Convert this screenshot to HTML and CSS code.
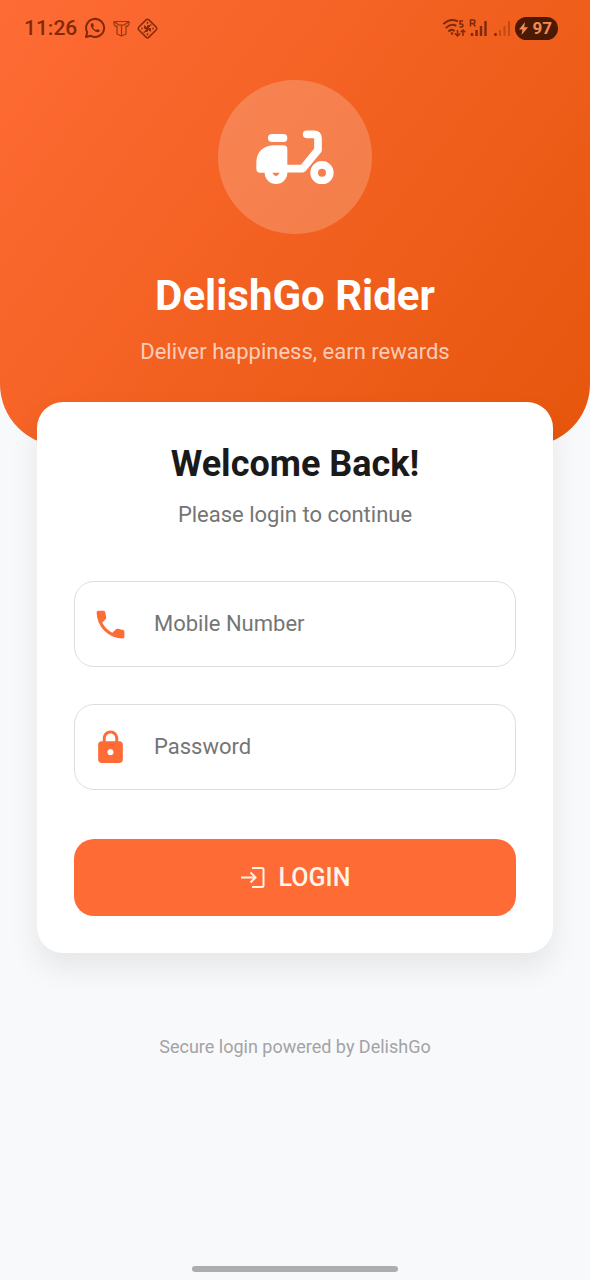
FILE: index.html
```html
<!DOCTYPE html>
<html lang="en">
<head>
<meta charset="utf-8">
<meta name="viewport" content="width=device-width, initial-scale=1">
<title>DelishGo Rider</title>
<link rel="stylesheet" href="styles.css">
</head>
<body>
<header class="hero">
  <div class="status">
    <div class="status-group">
      <span class="clock">11:26</span>
      <svg class="status-icon" width="22" height="22" viewBox="0 0 22 22" fill="none" stroke="currentColor" stroke-width="2" aria-hidden="true">
        <path d="M2 20 3.2 15.2A9 9 0 1 1 6.800 18.800Z" stroke-linejoin="round"/>
        <path d="M7.300 6.200C6 8 7 10.500 9 12.600S13.500 16 15.300 14.800L15.800 13.200 13.500 12 12.300 13.100C11 12.700 9.500 11.200 9 9.900L10 8.800 9 6.200Z" fill="currentColor" stroke="none"/>
      </svg>
      <svg class="status-icon thin" width="17" height="17" viewBox="0 0 17 17" fill="none" stroke="currentColor" stroke-width="1.200" stroke-linejoin="round" aria-hidden="true">
        <path d="M1 1.500H16V4L14.500 6.500 13 6V14L8.500 16 4 14V6L2.500 6.500 1 4ZM1.500 2 6 5H11L15.500 2M8.500 5.500V15.500"/>
      </svg>
      <svg class="status-icon" width="21" height="21" viewBox="0 0 22 22" fill="none" stroke="currentColor" stroke-width="1.500" stroke-linejoin="round" aria-hidden="true">
        <path d="M9.800 1.700Q11 .800 12.200 1.700L20.300 9.800Q21.200 11 20.300 12.200L12.200 20.300Q11 21.200 9.800 20.300L1.700 12.200Q.800 11 1.700 9.800Z"/>
        <path d="M11 11 8 8V11ZM11 11 14 8H11ZM11 11 14 14V11ZM11 11 8 14H11Z" fill="currentColor" stroke-width="1"/>
        <path d="M11 4V6M4.500 11H6M16 11H17.500M11 16V18M14.500 6.500V7.500M7.500 14.500V15.500"/>
      </svg>
    </div>
    <div class="status-group right">
      <svg width="68" height="20" viewBox="0 0 68 20" fill="none" stroke="currentColor" aria-hidden="true">
        <g stroke-width="2" stroke-linecap="round">
          <path d="M2 5.500Q8 0 15 3M4.500 9.500Q9 5.500 13.500 7.500M7 13Q9.500 11 12 12.500"/>
        </g>
        <circle cx="10" cy="15.500" r="1.300" fill="currentColor" stroke="none"/>
        <path d="M21 3H18V6H19.500Q21 6 21 7.500T19.500 9H17.500" stroke-width="1.600"/>
        <path d="M15.500 12V17.500M13 15.500 15.500 18 18 15.500M21 18V12M18.700 14.300 21 12 23.300 14.300" stroke-width="1.500"/>
        <path d="M28.500 8.500V2H31Q33 2 33 3.700T31 5.500H28.500M31 5.500 33.500 8.500" stroke-width="1.500"/>
        <path d="M30 15V18M34.500 12V18M39 8V18M43.500 3V18" stroke-width="2.400"/>
        <path d="M53.500 15V18" stroke-width="2.400"/>
        <path d="M58 12V18M62.500 8V18M67 3V18" stroke-width="2" opacity=".4"/>
      </svg>
      <span class="battery">
        <svg width="9" height="13" viewBox="0 0 9 13" fill="currentColor" aria-hidden="true"><path d="M6 0 0 7.500H3.500L2.500 13 9 5.200H5.200Z"/></svg>97
      </span>
    </div>
  </div>
  <div class="brand">
    <div class="logo">
      <svg viewBox="138 165 234 164" aria-hidden="true">
        <g fill="none" stroke="#fff">
          <path d="M290 178H311Q324 178 324 191V225L278 281H220" stroke-width="23" stroke-linecap="round" stroke-linejoin="round"/>
          <circle cx="336" cy="293" r="23.500" stroke-width="23"/>
        </g>
        <rect x="174" y="177" width="58" height="24" rx="12" fill="#fff"/>
        <path d="M190 211H220Q232 211 232 223V293A34 34 0 0 1 164 293H151Q139 293 139 281V260Q142 215 190 211ZM187 293Q198 314 209 293Z" fill="#fff" fill-rule="evenodd"/>
      </svg>
    </div>
    <h1 class="brand-name">DelishGo Rider</h1>
    <p class="tagline">Deliver happiness, earn rewards</p>
  </div>
</header>
<main class="content">
  <form class="card">
    <h2 class="card-title">Welcome Back!</h2>
    <p class="card-sub">Please login to continue</p>
    <div class="field">
      <label for="mobile" aria-label="Mobile Number"><svg class="field-icon" viewBox="0 0 24 24" aria-hidden="true"><path d="M4 3H7.500Q8.300 3 8.500 3.800L9.200 7.200Q9.400 8 8.800 8.600L6.600 10.800Q9 15 13.200 17.400L15.400 15.200Q16 14.600 16.800 14.800L20.200 15.500Q21 15.700 21 16.500V20Q21 21 20 21A17 17 0 0 1 3 4Q3 3 4 3Z"/></svg></label>
      <input id="mobile" class="field-input" type="tel" placeholder="Mobile Number">
    </div>
    <div class="field">
      <label for="password" aria-label="Password"><svg class="field-icon" viewBox="0 0 24 24" aria-hidden="true"><path fill-rule="evenodd" d="M18 8h-1V6c0-2.760-2.240-5-5-5S7 3.240 7 6v2H6c-1.100 0-2 .900-2 2v10c0 1.100.900 2 2 2h12c1.100 0 2-.900 2-2V10c0-1.100-.900-2-2-2zm-6 9c-1.100 0-2-.900-2-2s.900-2 2-2 2 .900 2 2-.900 2-2 2zm3.100-9H8.900V6c0-1.710 1.390-3.100 3.100-3.100s3.100 1.390 3.100 3.100v2z"/></svg></label>
      <input id="password" class="field-input" type="password" placeholder="Password">
    </div>
    <button class="login" type="button">
      <svg width="25" height="23" viewBox="0 0 25 23" fill="none" stroke="currentColor" stroke-width="2" aria-hidden="true"><path d="M1 11.500H15M10.500 6.500 15.500 11.500 10.500 16.500M12 2H22Q23.500 2 23.500 3.500V19.500Q23.500 21 22 21H12"/></svg>
      LOGIN
    </button>
  </form>
  <p class="footnote">Secure login powered by DelishGo</p>
</main>
<div class="home-bar"></div>
</body>
</html>
```
FILE: styles.css
```css
* { box-sizing: border-box; }
h1, h2, p { margin: 0; }
body {
  margin: 0;
  min-height: 100vh;
  display: flex;
  flex-direction: column;
  background: #f8f9fb;
  color: #1a1a1a;
  font-family: Roboto, "Liberation Sans", sans-serif;
}
.hero {
  padding-bottom: 80px;
  border-radius: 0 0 62px 62px;
  background: linear-gradient(127deg, #ff6b35, #e6560c);
}
.status {
  height: 56px;
  padding: 0 32px 0 24px;
  display: flex;
  align-items: center;
  justify-content: space-between;
  color: #7e2a0b;
}
.status-group { display: flex; align-items: center; gap: 7px; }
.status-group.right { gap: 5px; }
.clock { font-size: 21px; font-weight: 500; }
.thin { opacity: .8; }
.battery {
  height: 23px;
  padding: 0 6px 0 4px;
  display: flex;
  align-items: center;
  gap: 4px;
  border-radius: 12px;
  background: #4a1a04;
  color: #f58a50;
  font-size: 17px;
  font-weight: 700;
}
.brand {
  padding-top: 24px;
  display: flex;
  flex-direction: column;
  align-items: center;
  text-align: center;
}
.logo {
  width: 154px;
  height: 154px;
  display: grid;
  place-items: center;
  border-radius: 50%;
  background: rgba(255, 255, 255, .2);
}
.logo svg { width: 78px; }
.brand-name {
  margin-top: 36px;
  color: #fff;
  font-size: 42px;
  line-height: 52px;
  font-weight: 700;
}
.tagline {
  margin-top: 16px;
  color: rgba(255, 255, 255, .7);
  font-size: 22px;
  line-height: 28px;
}
.content { padding: 0 37px; }
.card {
  margin-top: -44px;
  padding: 37px;
  display: flex;
  flex-direction: column;
  border-radius: 26px;
  background: #fff;
  box-shadow: 0 15px 30px rgba(0, 0, 0, .08);
}
.card-title {
  font-size: 36px;
  line-height: 50px;
  font-weight: 700;
  text-align: center;
}
.card-sub {
  margin: 12px 0 36px;
  color: #757575;
  font-size: 22px;
  line-height: 28px;
  text-align: center;
}
.field {
  height: 86px;
  margin-top: 16px;
  padding: 0 17px;
  display: flex;
  align-items: center;
  gap: 25px;
  border: 1px solid #dcdfe1;
  border-radius: 20px;
}
.field + .field { margin-top: 37px; }
.field label { display: flex; }
.field-icon { width: 37px; height: 37px; fill: #ff6b35; }
.field-input {
  flex: 1;
  min-width: 0;
  padding: 0;
  border: 0;
  outline: 0;
  background: none;
  color: #1a1a1a;
  font: 400 22px/28px Roboto, "Liberation Sans", sans-serif;
}
.field-input::placeholder { color: #757575; opacity: 1; }
.login {
  height: 77px;
  margin-top: 49px;
  display: flex;
  align-items: center;
  justify-content: center;
  gap: 14px;
  border: 0;
  border-radius: 20px;
  background: #ff6b35;
  color: #fff3ea;
  font: 500 25px/32px Roboto, "Liberation Sans", sans-serif;
}
.footnote {
  margin-top: 82px;
  color: #a3a3a5;
  font-size: 18px;
  line-height: 24px;
  text-align: center;
}
.home-bar {
  width: 35%;
  height: 6px;
  margin: auto auto 8px;
  border-radius: 3px;
  background: #adadaf;
}
```
